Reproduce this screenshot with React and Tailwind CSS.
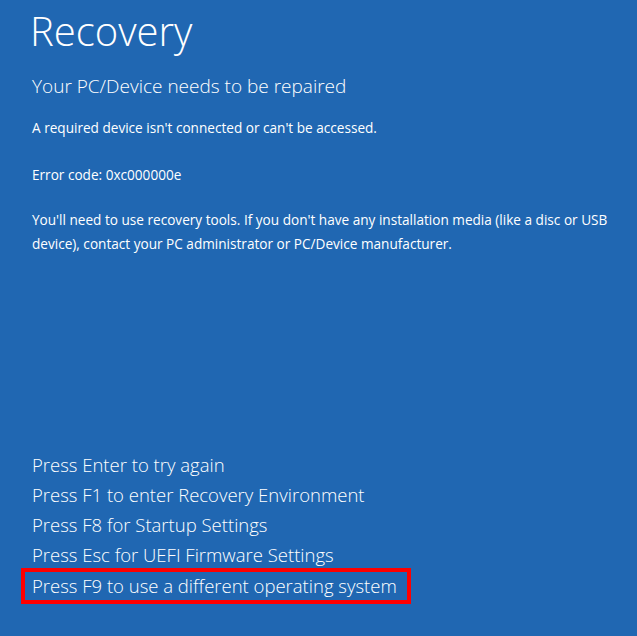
export default function App() {
  return (
    <div className="min-h-screen w-full bg-[#2067b2] text-white font-['Open_Sans',sans-serif] flex flex-col pl-[32px]">
      {/* Header */}
      <div className="pt-[5px]">
        <h1 className="text-[40px] font-light leading-[52px] -ml-[2px]">Recovery</h1>
        <h2 className="text-[19px] font-light leading-[26px] mt-[16px]">Your PC/Device needs to be repaired</h2>
      </div>

      {/* Details */}
      <div className="text-[13.6px] leading-[24px] mt-[17px] pr-[20px]">
        <p>A required device isn't connected or can't be accessed.</p>
        <p className="mt-[23px]">Error code: 0xc000000e</p>
        <p className="mt-[21px]">
          You'll need to use recovery tools. If you don't have any installation media (like a disc or USB
          device), contact your PC administrator or PC/Device manufacturer.
        </p>
      </div>

      {/* Options */}
      <div className="mt-auto pb-[32px] text-[18.5px] font-light leading-[30px]">
        <p>Press Enter to try again</p>
        <p>Press F1 to enter Recovery Environment</p>
        <p>Press F8 for Startup Settings</p>
        <p>Press Esc for UEFI Firmware Settings</p>
        <div className="-ml-[11px] -mt-[2px] w-[390px] border-4 border-[#ff0000] pl-[7px] leading-[28px]">
          Press F9 to use a different operating system
        </div>
      </div>
    </div>
  )
}
